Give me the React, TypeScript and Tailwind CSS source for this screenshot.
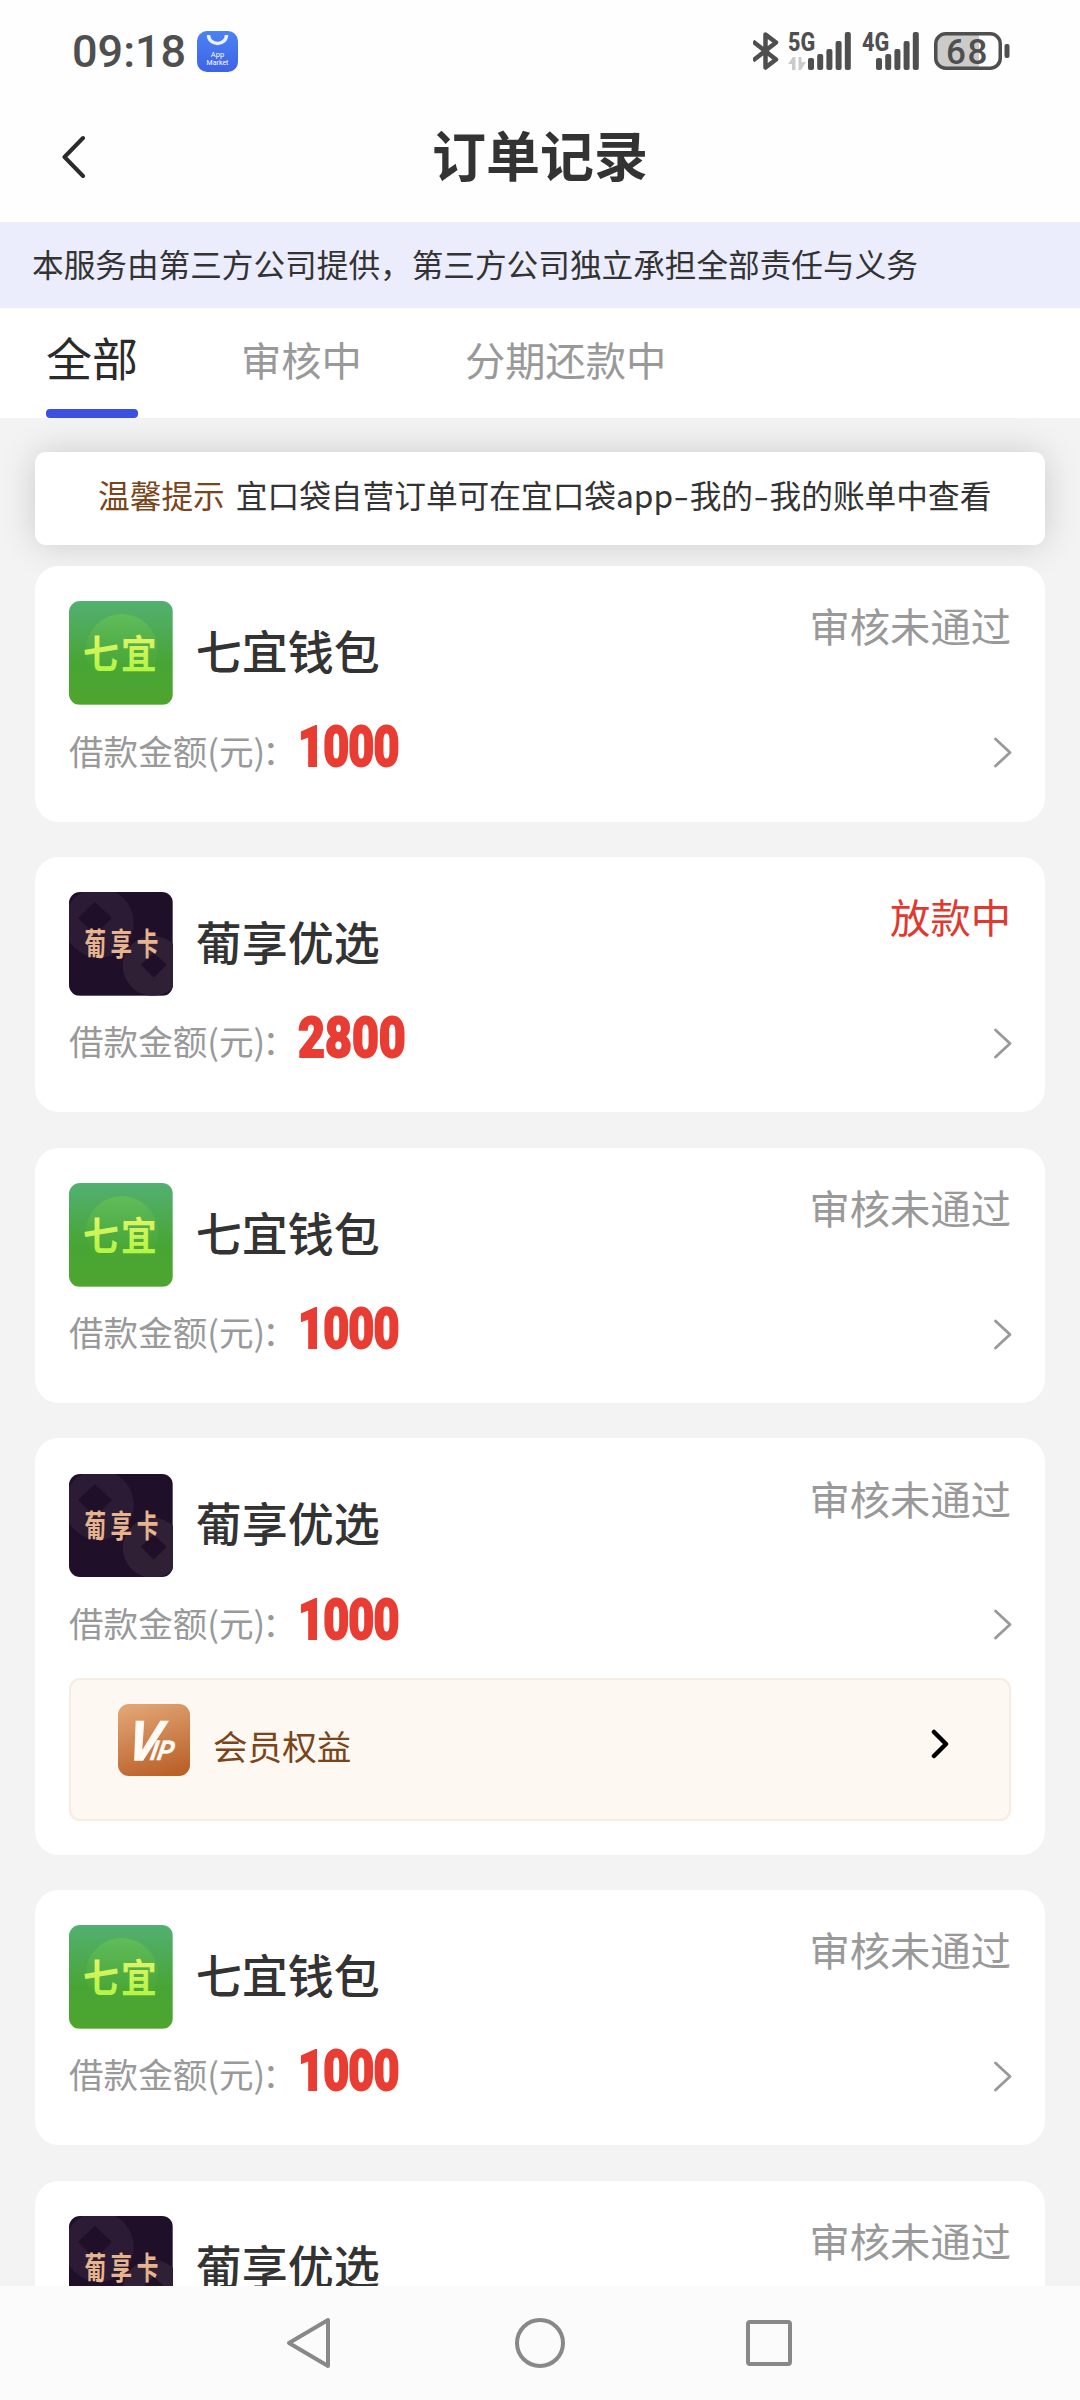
import React from 'react';

type Brand = 'qiyi' | 'puxiang';

interface Order {
  id: number;
  brand: Brand;
  status: string;
  amount: string;
  vip?: boolean;
}

const orders: Order[] = [
  { id: 1, brand: 'qiyi', status: '审核未通过', amount: '1000' },
  { id: 2, brand: 'puxiang', status: '放款中', amount: '2800' },
  { id: 3, brand: 'qiyi', status: '审核未通过', amount: '1000' },
  { id: 4, brand: 'puxiang', status: '审核未通过', amount: '1000', vip: true },
  { id: 5, brand: 'qiyi', status: '审核未通过', amount: '1000' },
  { id: 6, brand: 'puxiang', status: '审核未通过', amount: '1000' },
];

const brandNames: Record<Brand, string> = {
  qiyi: '七宜钱包',
  puxiang: '葡享优选',
};

const SignalBars = () => (
  <svg width="43" height="38" viewBox="0 0 43 38" fill="#4f4f4f">
    <rect x="0" y="26" width="6" height="12" rx="2" />
    <rect x="9.2" y="22" width="6" height="16" rx="2" />
    <rect x="18.4" y="17" width="6" height="21" rx="2" />
    <rect x="27.6" y="9" width="6" height="29" rx="2" />
    <rect x="36.8" y="0" width="6" height="38" rx="2" />
  </svg>
);

const StatusBar = () => (
  <div className="flex h-[102px] items-center justify-between pl-[72px] pr-[70px] text-[#4f4f4f]">
    <div className="flex items-center">
      <span className="w-[125px] font-['Roboto'] text-[45px] font-medium leading-none">09:18</span>
      <svg width="41" height="41" viewBox="0 0 41 41">
        <defs>
          <linearGradient id="market" x1="0" y1="0" x2="0" y2="1">
            <stop offset="0" stopColor="#4b83f3" />
            <stop offset="1" stopColor="#3f62e6" />
          </linearGradient>
        </defs>
        <rect width="41" height="41" rx="10" fill="url(#market)" />
        <path d="M11.5 4 a9 8.5 0 0 0 18 0" fill="none" stroke="#eaf1ff" strokeWidth="3.5" />
        <text x="20.5" y="26" textAnchor="middle" fontSize="7.5" fill="#fff" fontFamily="Roboto">App</text>
        <text x="20.5" y="34" textAnchor="middle" fontSize="7" fill="#fff" fontFamily="Roboto">Market</text>
      </svg>
    </div>
    <div className="flex items-center">
      <svg width="26" height="38" viewBox="0 0 26 38" fill="none" stroke="#4f4f4f" strokeWidth="4.500" strokeLinejoin="round">
        <path d="M0 9.500 L23 27.500 L12.500 35.500 V2.500 L23 10.500 L0 28.500" />
      </svg>
      <div className="ml-[9px] flex h-[38px]">
        <div className="flex w-[20px] flex-col justify-between">
          <span className="origin-left scale-x-[0.83] whitespace-nowrap font-['Roboto'] text-[26px] font-extrabold leading-[20px]">5G</span>
          <svg width="18" height="13" viewBox="0 0 18 13" fill="#cbcbcb">
            <path d="M0 7 L5 0 H7.500 V13 H4 V7 Z M10.500 0 H13.500 V5 H18 L13 13 H10.500 Z" />
          </svg>
        </div>
        <SignalBars />
      </div>
      <div className="ml-[11px] flex h-[38px]">
        <div className="w-[14px]">
          <span className="block origin-left scale-x-[0.83] whitespace-nowrap font-['Roboto'] text-[26px] font-extrabold leading-[20px]">4G</span>
        </div>
        <SignalBars />
      </div>
      <svg className="ml-[15px]" width="76" height="38" viewBox="0 0 76 38">
        <path d="M11 2 H45 V36 H11 a9 9 0 0 1 -9 -9 V11 a9 9 0 0 1 9 -9" fill="#cbcbcb" />
        <rect x="1.750" y="1.750" width="64.500" height="34.500" rx="10" fill="none" stroke="#4f4f4f" strokeWidth="3.500" />
        <rect x="70.500" y="12" width="5" height="14" rx="2" fill="#4f4f4f" />
        <text x="33.500" y="31.500" textAnchor="middle" fontSize="35" fontWeight="500" letterSpacing="1.500" fill="#4f4f4f" fontFamily="Roboto">68</text>
      </svg>
    </div>
  </div>
);

const Header = () => (
  <div className="grid h-[120px] grid-cols-3 items-center px-[62px] pb-[10px]">
    <svg width="24" height="44" viewBox="0 0 24 44" fill="none" stroke="#2b2b2b" strokeWidth="4" strokeLinecap="round" strokeLinejoin="round">
      <path d="M21 3 L2.500 22 L21 41" />
    </svg>
    <h1 className="pb-[7px] text-center text-[54px] font-bold leading-none text-[#333]">订单记录</h1>
  </div>
);

const Tabs = () => (
  <div className="flex h-[110px] bg-white pl-[46px] leading-none text-[#999]">
    <div className="flex h-full w-[92px] flex-col justify-between text-[46px] text-[#2b2b2b]">
      <span className="pt-[25px]">全部</span>
      <span className="h-[9px] w-full rounded-[4px] bg-[#3c50e0]" />
    </div>
    <span className="ml-[103px] pt-[31px] text-[40.3px]">审核中</span>
    <span className="ml-[103px] pt-[31px] text-[40.3px]">分期还款中</span>
  </div>
);

const QiyiLogo = () => (
  <svg className="h-[103.7px] w-[103.7px] rounded-[11px]" viewBox="0 0 104 104">
    <defs>
      <linearGradient id="qiyiBg" x1="0" y1="0" x2="0" y2="1">
        <stop offset="0" stopColor="#52b072" />
        <stop offset="0.6" stopColor="#48a535" />
        <stop offset="1" stopColor="#4ea52e" />
      </linearGradient>
      <linearGradient id="qiyiDisc" x1="0" y1="0" x2="0" y2="1">
        <stop offset="0" stopColor="#60bd58" />
        <stop offset="1" stopColor="#4ba72f" stopOpacity="0" />
      </linearGradient>
      <linearGradient id="qiyiText" x1="0" y1="0" x2="0" y2="1">
        <stop offset="0" stopColor="#f0f373" />
        <stop offset="1" stopColor="#a8f53b" />
      </linearGradient>
    </defs>
    <rect width="104" height="104" fill="url(#qiyiBg)" />
    <circle cx="53" cy="49" r="36" fill="url(#qiyiDisc)" />
    <text transform="translate(14 67.500) scale(0.92 1)" fontSize="39" fontWeight="700" letterSpacing="2.500" fill="url(#qiyiText)">七宜</text>
  </svg>
);

const PuxiangLogo = () => (
  <svg className="h-[103.7px] w-[103.7px] rounded-[11px]" viewBox="0 0 104 104">
    <rect width="104" height="104" fill="#200f28" />
    <circle cx="30" cy="31" r="35" fill="#2b1b34" />
    <path d="M26 10 L43 26 L26 43 L9 26 Z" fill="#200f28" />
    <circle cx="84" cy="74" r="30" fill="#302036" />
    <path d="M85 61 L98 73 L85 86 L72 73 Z" fill="#200f28" />
    <text transform="translate(15.500 63) scale(0.7 1)" fontSize="31" fontWeight="700" letterSpacing="6.500" fill="#e6b48e">葡享卡</text>
  </svg>
);

const VipRow = () => (
  <div className="mt-[14px] flex h-[143px] items-start rounded-[11px] border-2 border-[#f8ebe1] bg-[#fdf8f1] pl-[47px] pr-[60px] pt-[24px]">
    <svg width="72" height="72" viewBox="0 0 72 72">
      <defs>
        <linearGradient id="vip" x1="0.3" y1="0" x2="0.6" y2="1">
          <stop offset="0" stopColor="#e0a473" />
          <stop offset="1" stopColor="#bb622b" />
        </linearGradient>
      </defs>
      <rect width="72" height="72" rx="11" fill="url(#vip)" />
      <text transform="translate(7.500 56) skewX(-10) scale(0.86 1)" fontSize="56" fontWeight="700" fontStyle="italic" fill="#fffaf4" stroke="#fffaf4" strokeWidth="1.500" fontFamily="Liberation Sans">
        V<tspan dx="-9.500" fontSize="28" strokeWidth="0.500">IP</tspan>
      </text>
    </svg>
    <span className="ml-[23px] mt-[24px] flex-1 text-[34.6px] leading-none text-[#7a451a]">会员权益</span>
    <svg className="mt-[25px]" width="18" height="30" viewBox="0 0 18 30" fill="none" stroke="#000" strokeWidth="4.500" strokeLinecap="round" strokeLinejoin="round">
      <path d="M3 3 L15 15 L3 27" />
    </svg>
  </div>
);

const Amount = ({ value }: { value: string }) => {
  const narrow = value.startsWith('1');
  return (
    <span
      className={`origin-left pb-[2px] font-['Roboto'] text-[56px] font-black text-[#e93c32] [-webkit-text-stroke:1.8px_#e93c32] ${
        narrow ? '-ml-[2px] scale-x-[0.8] tracking-[-1px]' : '-ml-[2px] scale-x-[0.83]'
      }`}
    >
      {value}
    </span>
  );
};

const OrderCard = ({ order }: { order: Order }) => (
  <div className={`rounded-[24px] bg-white px-[34px] pt-[35.2px] ${order.vip ? 'h-[416.2px]' : 'h-[255.6px]'}`}>
    <div className="flex items-center leading-none">
      {order.brand === 'qiyi' ? <QiyiLogo /> : <PuxiangLogo />}
      <span className="ml-[23px] flex-1 pb-[8px] text-[46px] font-medium text-[#333]">{brandNames[order.brand]}</span>
      <span className={`self-start pt-[4px] text-[40.3px] ${order.status === '放款中' ? 'text-[#e0392f]' : 'text-[#999]'}`}>
        {order.status}
      </span>
    </div>
    <div className="flex h-[87px] items-center leading-none">
      <span className="pt-[3px] text-[34.6px] text-[#999]">
        借款金额(元)<span className="-ml-[3px] mr-[3px]">：</span>
      </span>
      <Amount value={order.amount} />
      <svg className="-mr-[1px] ml-auto mt-[8px]" width="19" height="31" viewBox="0 0 19 31" fill="none" stroke="#999" strokeWidth="2.800" strokeLinecap="round" strokeLinejoin="round">
        <path d="M2.500 2 L17 15.500 L2.500 29" />
      </svg>
    </div>
    {order.vip && <VipRow />}
  </div>
);

const NavBar = () => (
  <div className="flex h-[114px] items-center justify-between bg-[#fbfbfb] pl-[286px] pr-[287px]">
    <svg width="46" height="52" viewBox="0 0 46 52" fill="none" stroke="#888" strokeWidth="4" strokeLinejoin="round">
      <path d="M42 3 V49 L3 26 Z" />
    </svg>
    <svg width="52" height="52" viewBox="0 0 52 52" fill="none" stroke="#888" strokeWidth="4">
      <circle cx="27" cy="26" r="23" />
    </svg>
    <svg width="48" height="48" viewBox="0 0 48 48" fill="none" stroke="#888" strokeWidth="4">
      <rect x="3" y="3" width="42" height="42" rx="2" />
    </svg>
  </div>
);

const Dash = () => <span className="inline-block w-[16.5px] scale-x-[1.4] text-center">-</span>;

const App = () => {
  return (
    <div className="flex h-[2400px] w-[1080px] flex-col overflow-hidden bg-[#f3f3f3] font-['Noto_Sans_CJK_SC',sans-serif]">
      <div className="shrink-0 bg-[#fefefe]">
        <StatusBar />
        <Header />
        <p className="flex h-[86px] items-center bg-[#ebedfc] pb-[3px] pl-[32px] text-[31.65px] leading-none text-[#333]">
          本服务由第三方公司提供，第三方公司独立承担全部责任与义务
        </p>
        <Tabs />
      </div>
      <div className="min-h-0 flex-1 overflow-hidden px-[35px] pt-[34px]">
        <div className="flex h-[93px] items-center rounded-[11px] bg-white pb-[8px] pl-[63px] text-[31.7px] leading-none text-[#333] shadow-[0_0_36px_rgba(0,0,0,0.16)]">
          <span className="mr-[11px] text-[#7a451a]">温馨提示</span>
          <span className="whitespace-nowrap">
            宜口袋自营订单可在宜口袋app
            <Dash />
            我的
            <Dash />
            我的账单中查看
          </span>
        </div>
        <div className="relative mt-[21.1px] flex flex-col gap-[35.2px]">
          {orders.map((order) => (
            <OrderCard key={order.id} order={order} />
          ))}
        </div>
      </div>
      <NavBar />
    </div>
  );
};

export default App;
